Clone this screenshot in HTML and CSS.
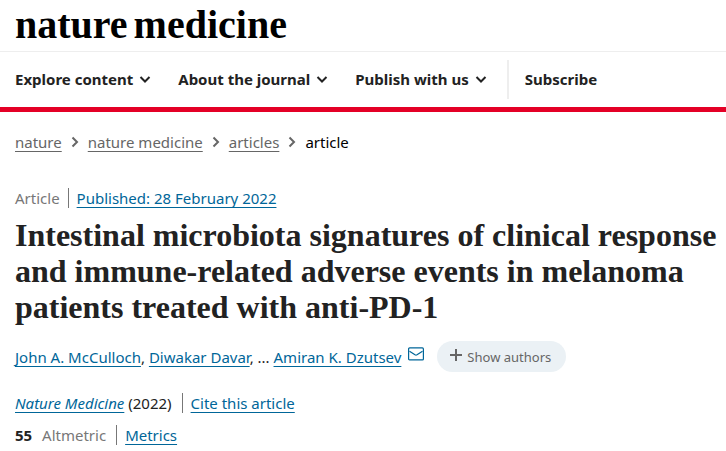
FILE: index.html
```
<!DOCTYPE html>
<html lang="en">
<head>
<meta charset="utf-8">
<meta name="viewport" content="width=device-width, initial-scale=1">
<title>Intestinal microbiota signatures | Nature Medicine</title>
<link rel="stylesheet" href="styles.css">
</head>
<body>
<header class="header">
  <div class="brand"><a class="logo" href="#"><span>nature</span> <span>medicine</span></a></div>
  <nav class="menu" aria-label="Main">
    <button class="menu-item" type="button">Explore content <svg class="chevron" viewBox="0 0 12 12" aria-hidden="true"><path d="M1.500 4 6 8.500 10.500 4"/></svg></button>
    <button class="menu-item" type="button">About the journal <svg class="chevron" viewBox="0 0 12 12" aria-hidden="true"><path d="M1.500 4 6 8.500 10.500 4"/></svg></button>
    <button class="menu-item" type="button">Publish with us <svg class="chevron" viewBox="0 0 12 12" aria-hidden="true"><path d="M1.500 4 6 8.500 10.500 4"/></svg></button>
    <a class="menu-item subscribe" href="#">Subscribe</a>
  </nav>
</header>
<main class="content">
  <nav class="crumbs" aria-label="Breadcrumb">
    <a href="#">nature</a>
    <svg class="arrow" viewBox="0 0 8 12" aria-hidden="true"><path d="M1.500 1.500 6 6 1.500 10.500"/></svg>
    <a href="#">nature medicine</a>
    <svg class="arrow" viewBox="0 0 8 12" aria-hidden="true"><path d="M1.500 1.500 6 6 1.500 10.500"/></svg>
    <a href="#">articles</a>
    <svg class="arrow" viewBox="0 0 8 12" aria-hidden="true"><path d="M1.500 1.500 6 6 1.500 10.500"/></svg>
    <span class="current">article</span>
  </nav>
  <article>
    <div class="row">
      <span class="muted">Article</span>
      <span class="divided"><a href="#">Published: 28 February 2022</a></span>
    </div>
    <h1 class="title">Intestinal microbiota signatures of clinical response<br>and immune-related adverse events in melanoma<br>patients treated with anti-PD-1</h1>
    <div class="authors">
      <span><a href="#">John A. McCulloch</a>, <a href="#">Diwakar Davar</a>, ... <a href="#">Amiran K. Dzutsev</a></span>
      <a class="mail" href="#" aria-label="Email author"><svg viewBox="0 0 16 14" aria-hidden="true"><rect x=".6" y=".9" width="14.800" height="12" rx="1"/><path d="M1.500 4.200 7 7.800q1 .6 2 0l5.500-3.600"/></svg></a>
      <button class="show" type="button"><svg viewBox="0 0 12 12" aria-hidden="true"><path d="M6 0v12M0 6h12"/></svg>Show authors</button>
    </div>
    <div class="row citation">
      <span><a href="#"><i>Nature Medicine</i></a> (2022)</span>
      <span class="divided"><a href="#">Cite this article</a></span>
    </div>
    <div class="row metrics">
      <span><b>55</b> <span class="muted count-label">Altmetric</span></span>
      <span class="divided"><a href="#">Metrics</a></span>
    </div>
  </article>
</main>
</body>
</html>
```
FILE: styles.css
```
* { box-sizing: border-box; }
body {
  margin: 0;
  background: #fff;
  color: #222;
  font: 15px/20px "Noto Sans", "Open Sans", sans-serif;
}
a {
  color: #069;
  text-decoration: underline;
  text-decoration-thickness: 1px;
  text-underline-offset: 3px;
  text-decoration-skip-ink: none;
}
svg { fill: none; stroke: currentColor; flex: none; }
.header { border-bottom: 5px solid #e40026; }
.brand {
  padding: 5px 15px 6px;
  border-bottom: 1px solid #eee;
}
.logo {
  display: flex;
  gap: 6px;
  color: #000;
  font: bold 40px/40px "Liberation Serif", serif;
  text-decoration: none;
  white-space: nowrap;
}
.menu {
  display: flex;
  align-items: center;
  gap: 27px;
  padding: 8px 15px;
}
.menu-item {
  display: flex;
  align-items: center;
  gap: 6px;
  padding: 0 0 1px;
  border: 0;
  background: none;
  color: #222;
  font: bold 15px/20px "Noto Sans", "Open Sans", sans-serif;
  text-decoration: none;
  white-space: nowrap;
}
.chevron { width: 12px; height: 12px; stroke-width: 2; }
.subscribe {
  height: 39px;
  padding-left: 16px;
  border-left: 2px solid #eee;
  margin-left: -7px;
}
.content { padding: 20px 4px 5px 15px; }
.crumbs {
  display: flex;
  align-items: center;
  gap: 9px;
  margin-bottom: 36px;
}
.crumbs a { color: #666; }
.arrow { width: 8px; height: 12px; stroke: #666; stroke-width: 2; }
.current { color: #000; }
.row { display: flex; align-items: center; }
.muted { color: #777; }
.divided {
  margin-left: 8px;
  padding-left: 8px;
  border-left: 1px solid #777;
}
.title {
  margin: 9px 0 16px;
  font: bold 32px/36px "Liberation Serif", serif;
  white-space: nowrap;
}
.authors {
  display: flex;
  align-items: center;
  margin-bottom: 21px;
  white-space: nowrap;
}
.mail { display: flex; margin: 0 13px 6px 7px; }
.mail svg { width: 16px; height: 14px; stroke-width: 1.2; }
.show {
  display: flex;
  align-items: center;
  gap: 5px;
  height: 31px;
  padding: 0 15px 0 13px;
  border: 0;
  border-radius: 16px;
  background: #ebf1f5;
  color: #666;
  font: 13px/20px "Noto Sans", "Open Sans", sans-serif;
}
.show svg { width: 12px; height: 12px; stroke-width: 2; margin-bottom: 4px; }
.citation { margin-bottom: 12px; }
.citation .divided, .metrics .divided { margin-left: 10px; }
.count-label { margin-left: 6px; }
```
